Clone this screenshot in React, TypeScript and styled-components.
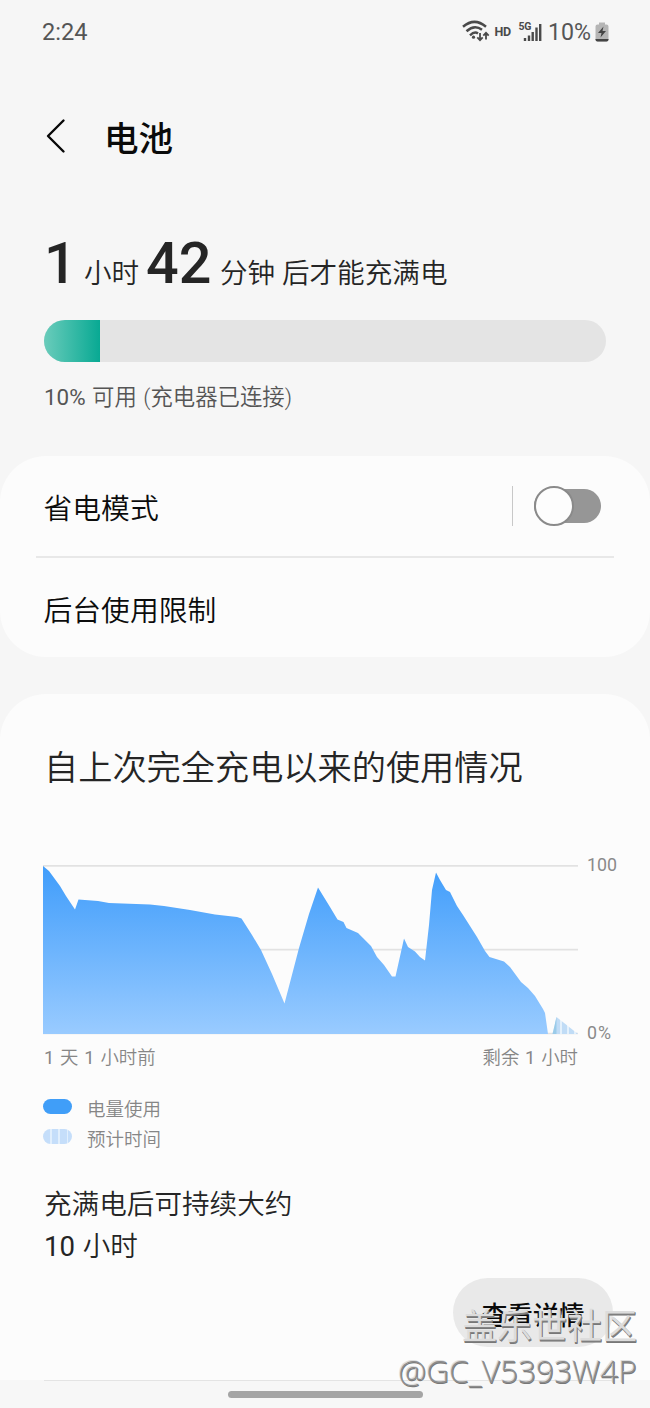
import React from "react";
import styled, { createGlobalStyle } from "styled-components";

const GlobalStyle = createGlobalStyle`
  * { box-sizing: border-box; }
  body {
    margin: 0;
    background: #f6f6f6;
    color: #252525;
    font-family: Roboto, "Noto Sans CJK SC", sans-serif;
    font-weight: 350;
  }
`;

const Screen = styled.div`
  position: relative;
  width: 650px;
  height: 1408px;
  overflow: hidden;
  display: flex;
  flex-direction: column;
  background: #f6f6f6;
`;

const Digits = styled.span`
  font-weight: 400;
`;

const StatusBar = styled.header`
  display: flex;
  align-items: center;
  justify-content: space-between;
  height: 64px;
  padding: 0 41px 1px 42px;
  color: #555;
  font-size: 23.6px;
  font-weight: 400;
`;

const StatusIcons = styled.div`
  display: flex;
  align-items: center;
`;

const Percent = styled.span`
  width: 49px;
  padding-left: 2px;
  font-size: 23.2px;
  white-space: nowrap;
`;

const TitleBar = styled.div`
  display: flex;
  align-items: center;
  height: 82px;
  margin-top: 32px;
  padding: 0 0 0 46px;
`;

const BackIcon = styled.svg`
  display: block;
  width: 20px;
  height: 36px;
  margin-top: -2px;
`;

const PageTitle = styled.h1`
  margin: 0 0 0 38px;
  padding-top: 4px;
  color: #0a0a0a;
  font-size: 34.6px;
  font-weight: 500;
  line-height: 50px;
`;

const Summary = styled.section`
  display: flex;
  flex-direction: column;
  height: 278px;
  padding: 52px 44px 0;
`;

const TimeLeft = styled.div`
  display: flex;
  align-items: baseline;
  height: 90px;
  margin-top: -1px;
  margin-bottom: 1px;
  line-height: 70px;
  font-size: 27.6px;
`;

const BigNumber = styled.span<{ $width: number }>`
  width: ${(p) => p.$width}px;
  font-size: 57.5px;
  font-weight: 500;
`;

const Unit = styled.span<{ $width?: number }>`
  width: ${(p) => (p.$width ? `${p.$width}px` : "auto")};
  white-space: nowrap;
`;

const Gauge = styled.div`
  height: 42px;
  border-radius: 21px;
  flex: none;
  overflow: hidden;
  background: #e4e4e4;
`;

const GaugeFill = styled.div`
  width: 56px;
  height: 100%;
  background: linear-gradient(90deg, #6accbb, #08a993);
`;

const Caption = styled.p`
  margin: 19px 0 0;
  color: #555;
  font-size: 22.4px;
  line-height: 32px;
  word-spacing: 1px;
`;

const Card = styled.section<{ $open?: boolean }>`
  flex: none;
  background: #fcfcfc;
  border-radius: ${(p) => (p.$open ? "46px 46px 0 0" : "46px")};
`;

const SettingsCard = styled(Card)`
  height: 201px;
  padding: 0 36px;
`;

const SettingRow = styled.div<{ $line?: boolean }>`
  display: flex;
  align-items: center;
  height: ${(p) => (p.$line ? 102 : 99)}px;
  padding: 6px 13px 0 7.5px;
  border-bottom: ${(p) => (p.$line ? "2px solid #e8e8e8" : "0")};
  color: #0c0c0c;
  font-size: 28.8px;
  line-height: 40px;
`;

const ToggleGroup = styled.div`
  display: flex;
  align-items: center;
  margin: -6px 0 0 auto;
`;

const Separator = styled.i`
  width: 1px;
  height: 40px;
  margin-right: 21px;
  background: #c8c8c8;
`;

const Toggle = styled.div`
  display: flex;
  align-items: center;
  width: 67px;
  height: 34px;
  border-radius: 17px;
  background: #969696;
`;

const Knob = styled.i`
  width: 40px;
  height: 40px;
  flex: none;
  border: 2px solid #8a8a8a;
  border-radius: 50%;
  background: #fdfdfd;
`;

const UsageCard = styled(Card)`
  height: 686px;
  margin-top: 37px;
  padding: 51px 44px 0;
`;

const UsageTitle = styled.h2`
  margin: 0;
  font-size: 34.2px;
  font-weight: 350;
  line-height: 46px;
`;

const ChartRow = styled.div`
  display: flex;
  height: 171px;
  margin: 73px -44px 0 -1px;
`;

const ChartSvg = styled.svg`
  display: block;
  width: 535px;
  height: 171px;
  flex: none;
`;

const AxisLabels = styled.div`
  display: flex;
  flex-direction: column;
  justify-content: space-between;
  margin: -10px 0 -9px 9px;
  color: #8a8a8a;
  font-size: 17.8px;
  font-weight: 400;
  line-height: 22px;
`;

const ZeroLabel = styled.span`
  letter-spacing: 1px;
`;

const TimeRange = styled.div`
  display: flex;
  justify-content: space-between;
  width: 534px;
  padding-top: 10px;
  color: #868686;
  font-size: 18.4px;
  line-height: 26px;
  word-spacing: 1.3px;
`;

const Legend = styled.ul`
  display: flex;
  flex-direction: column;
  margin: 24px 0 0 -1px;
  padding: 0;
  list-style: none;
  color: #868686;
  font-size: 18.5px;
  line-height: 30px;
`;

const LegendItem = styled.li`
  display: flex;
  align-items: center;
  gap: 15px;
  height: 30px;
`;

const Swatch = styled.i<{ $striped?: boolean }>`
  width: 29px;
  height: 15px;
  margin-top: -7px;
  border-radius: 8px;
  background: ${(p) =>
    p.$striped
      ? "repeating-linear-gradient(90deg, #c5defa 0 7px, #e1effd 7px 8.5px)"
      : "#409ef8"};
`;

const Estimate = styled.p`
  margin: 29px 0 0;
  font-size: 27.6px;
  line-height: 42px;
  word-spacing: 1px;
`;

const Actions = styled.div`
  display: flex;
  justify-content: flex-end;
  margin: 10px -7px 0 0;
`;

const DetailsButton = styled.button`
  width: 160px;
  height: 69px;
  padding: 6px 0 0;
  border: 0;
  border-radius: 35px;
  background: #e9e9e9;
  color: #0a0a0a;
  font: 500 25.7px/36px Roboto, "Noto Sans CJK SC", sans-serif;
`;

const NavArea = styled.footer`
  display: flex;
  flex-direction: column;
  align-items: center;
  gap: 10px;
  height: 28px;
  background: #f7f7f7;
`;

const Divider = styled.i`
  align-self: stretch;
  height: 1px;
  margin: 0 36px 0 44px;
  background: #e4e4e4;
`;

const Handle = styled.i`
  width: 195px;
  height: 7px;
  border-radius: 4px;
  background: #a5a5a5;
`;

const Watermark = styled.div`
  position: absolute;
  right: 13px;
  bottom: 15px;
  text-align: right;
  white-space: nowrap;
`;

const Community = styled.div`
  margin-bottom: 2px;
  color: #dcdcdc;
  text-shadow: 1px 1px 0 #858585, 1px 2px 0 #777;
  font: 400 35px/46px "Noto Sans CJK SC", sans-serif;
`;

const Author = styled.div`
  color: #8c8c8c;
  text-shadow: -1px -1px 0 #dedede, 0.5px 0.5px 0 #777;
  font: 300 31.6px/44px "Open Sans", sans-serif;
`;

function StatusGlyphs() {
  return (
    <svg width="84" height="30" viewBox="462 17 84 30" fill="none" stroke="#4a4a4a">
      <g strokeWidth="2.5">
        <path d="M463 26.8Q474.5 17 486 26.8" />
        <path d="M466.5 31.2Q474.5 24 482 29.8" />
        <path d="M470 35.3Q474.5 31 478 33.5" />
      </g>
      <circle cx="473.5" cy="37.2" r="1.6" fill="#4a4a4a" stroke="none" />
      <g strokeWidth="1.8">
        <path d="M480 33V40M477.3 37.3L480 40.2L482.7 37.3" />
        <path d="M486 39.5V33M483.3 35.7L486 32.8L488.7 35.7" />
      </g>
      <g fill="#4a4a4a" stroke="none" fontFamily="Roboto, sans-serif" fontWeight="700">
        <text x="494.5" y="35.8" fontSize="12.5" textLength="16.5">HD</text>
        <text x="518.5" y="29.5" fontSize="10.5" textLength="13">5G</text>
      </g>
      <g strokeWidth="2.4">
        <path d="M525 41V38M529 41V35.5M532.7 41V32M536.5 41V27.5M540.2 41V24" />
      </g>
    </svg>
  );
}

function BatteryGlyph() {
  return (
    <svg width="14" height="20" viewBox="0 0 14 20">
      <path d="M4 0.5H10V2.5H11.5Q13.5 2.5 13.5 4.5V17.5Q13.5 19.5 11.5 19.5H2.5Q0.5 19.5 0.5 17.5V4.5Q0.5 2.5 2.5 2.5H4Z" fill="#b5b5b5" />
      <path d="M0.5 17H13.5V17.5Q13.5 19.5 11.5 19.5H2.5Q0.5 19.5 0.5 17.5Z" fill="#444" />
      <path d="M8.5 4.5L3 11H6.5L5.5 15.5L11 9H7.5Z" fill="#444" />
    </svg>
  );
}

function UsageChart() {
  return (
    <ChartSvg viewBox="43 864 535 171">
      <defs>
        <linearGradient id="usage" gradientUnits="userSpaceOnUse" x1="0" y1="866" x2="0" y2="1034">
          <stop offset="0" stopColor="#409dfb" />
          <stop offset="1" stopColor="#99cbff" />
        </linearGradient>
        <pattern id="forecast" patternUnits="userSpaceOnUse" x="555" y="0" width="7" height="10">
          <rect width="7" height="10" fill="#c0dcf6" />
          <rect x="5" width="2" height="10" fill="#e4f1fc" />
        </pattern>
      </defs>
      <path d="M43 865.8H578M43 949.7H578M43 1033.5H578" stroke="#e2e2e2" strokeWidth="1.7" />
      <path
        fill="url(#usage)"
        d="M43 866L49 871L60 886L66 896L75 909.5L78.5 899.5L98 901L109 903L150 904.5L164 906L190 910L215 914.5L237 917L241.5 918.5L252 935L261 950L272 974L284.5 1003.5L299 948L309 914L318 887.5L330 907L337.5 919.5L343.5 922L346.5 928L358 933L371 946L377 957L384 965L392 976.5H395.5L404 938.5L408 947L415 951.5L420 957L425 960.5L429 925L432 890L436 872.5L440 880L446 890L450 892L457 906L463 915L470 926L477 937L485 951L489.5 957L504 961.5L510 967L521 982L528 988L535 996L543 1009L545 1013L548 1034H43Z"
      />
      <path d="M552.5 1034L556.5 1017L578 1034Z" fill="url(#forecast)" />
      <path d="M552.5 1034L556.5 1017V1034Z" fill="#9acbe9" />
    </ChartSvg>
  );
}

export default function App() {
  return (
    <Screen>
      <GlobalStyle />
      <StatusBar>
        <span>2:24</span>
        <StatusIcons>
          <StatusGlyphs />
          <Percent>10%</Percent>
          <BatteryGlyph />
        </StatusIcons>
      </StatusBar>
      <TitleBar>
        <BackIcon viewBox="0 0 20 36" fill="none" stroke="#080808" strokeWidth="2.4" strokeLinecap="round" strokeLinejoin="round">
          <path d="M17.5 2.5L2 18L17.5 33.5" />
        </BackIcon>
        <PageTitle>电池</PageTitle>
      </TitleBar>
      <Summary>
        <TimeLeft>
          <BigNumber $width={40}>1</BigNumber>
          <Unit $width={62}>小时</Unit>
          <BigNumber $width={74}>42</BigNumber>
          <Unit>分钟 后才能充满电</Unit>
        </TimeLeft>
        <Gauge>
          <GaugeFill />
        </Gauge>
        <Caption>
          <Digits>10%</Digits> 可用 (充电器已连接)
        </Caption>
      </Summary>
      <SettingsCard>
        <SettingRow $line>
          省电模式
          <ToggleGroup>
            <Separator />
            <Toggle>
              <Knob />
            </Toggle>
          </ToggleGroup>
        </SettingRow>
        <SettingRow>后台使用限制</SettingRow>
      </SettingsCard>
      <UsageCard $open>
        <UsageTitle>自上次完全充电以来的使用情况</UsageTitle>
        <ChartRow>
          <UsageChart />
          <AxisLabels>
            <span>100</span>
            <ZeroLabel>0%</ZeroLabel>
          </AxisLabels>
        </ChartRow>
        <TimeRange>
          <span>
            <Digits>1</Digits> 天 <Digits>1</Digits> 小时前
          </span>
          <span>
            剩余 <Digits>1</Digits> 小时
          </span>
        </TimeRange>
        <Legend>
          <LegendItem>
            <Swatch />
            电量使用
          </LegendItem>
          <LegendItem>
            <Swatch $striped />
            预计时间
          </LegendItem>
        </Legend>
        <Estimate>
          充满电后可持续大约
          <br />
          <Digits>10</Digits> 小时
        </Estimate>
        <Actions>
          <DetailsButton>查看详情</DetailsButton>
        </Actions>
      </UsageCard>
      <NavArea>
        <Divider />
        <Handle />
      </NavArea>
      <Watermark>
        <Community>盖乐世社区</Community>
        <Author>@GC_V5393W4P</Author>
      </Watermark>
    </Screen>
  );
}
